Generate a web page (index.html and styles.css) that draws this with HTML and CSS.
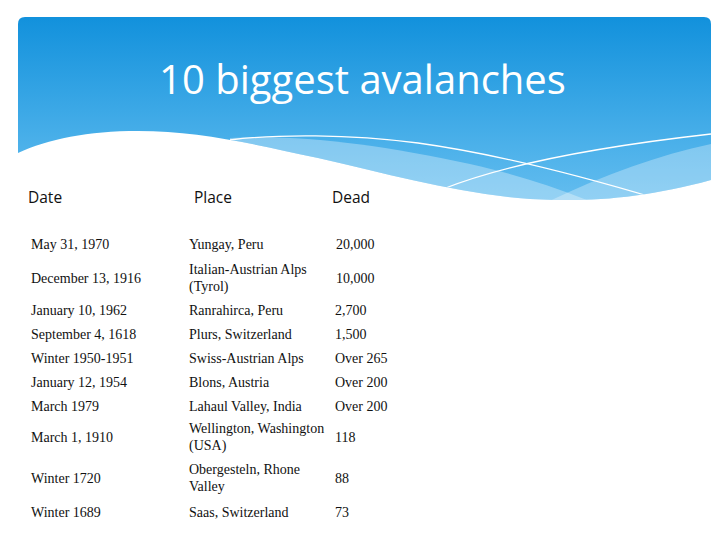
FILE: index.html
```html
<!DOCTYPE html>
<html>
<head>
<meta charset="utf-8">
<link rel="stylesheet" href="styles.css">
</head>
<body>
<div class="slide">
  <header class="banner">
    <svg class="banner-bg" width="693" height="185" viewBox="0 0 693 185" aria-hidden="true">
      <defs>
        <linearGradient id="sky" x1="0" y1="0" x2="0" y2="1">
          <stop offset="0" stop-color="#1291dc"/>
          <stop offset="0.7" stop-color="#4cb1ea"/>
          <stop offset="1" stop-color="#64bdef"/>
        </linearGradient>
        <clipPath id="wave">
          <path d="M0,7 Q0,0 7,0 L686,0 Q693,0 693,7 L693,163 C620,183 560,186 500,181 C430,174 370,157 300,141 C230,126 180,114 120,114 C70,114 30,122 0,136 Z"/>
        </clipPath>
      </defs>
      <g clip-path="url(#wave)">
        <rect x="0" y="0" width="693" height="185" fill="url(#sky)"/>
        <path d="M212,121 C280,117 360,127 452,147 C520,162 600,190 660,230 L212,230 Z" fill="#ffffff" fill-opacity="0.32"/>
        <path d="M500,200 C560,168 630,140 693,127 L693,230 L500,230 Z" fill="#ffffff" fill-opacity="0.3"/>
        <path d="M212,123 C260,117 330,117 400,126 C480,137 560,158 640,182" fill="none" stroke="#ffffff" stroke-width="1.3"/>
        <path d="M425,172 C475,152 560,132 693,117" fill="none" stroke="#ffffff" stroke-width="1.3"/>
      </g>
    </svg>
    <h1 class="title">10 biggest avalanches</h1>
  </header>

  <div class="labels">
    <span class="lab lab-date">Date</span>
    <span class="lab lab-place">Place</span>
    <span class="lab lab-dead">Dead</span>
  </div>

  <table class="data">
    <tr class="h28"><td>May 31, 1970</td><td>Yungay, Peru</td><td class="num">20,000</td></tr>
    <tr class="h40"><td>December 13, 1916</td><td>Italian-Austrian Alps<br>(Tyrol)</td><td class="num">10,000</td></tr>
    <tr><td>January 10, 1962</td><td>Ranrahirca, Peru</td><td>2,700</td></tr>
    <tr><td>September 4, 1618</td><td>Plurs, Switzerland</td><td>1,500</td></tr>
    <tr><td>Winter 1950-1951</td><td>Swiss-Austrian Alps</td><td>Over 265</td></tr>
    <tr><td>January 12, 1954</td><td>Blons, Austria</td><td>Over 200</td></tr>
    <tr><td>March 1979</td><td>Lahaul Valley, India</td><td>Over 200</td></tr>
    <tr class="h38"><td>March 1, 1910</td><td>Wellington, Washington<br>(USA)</td><td>118</td></tr>
    <tr class="h44"><td>Winter 1720</td><td>Obergesteln, Rhone<br>Valley</td><td>88</td></tr>
    <tr><td>Winter 1689</td><td>Saas, Switzerland</td><td>73</td></tr>
  </table>
</div>
</body>
</html>
```

FILE: styles.css
```css
html, body {
  margin: 0;
  padding: 0;
  background: #ffffff;
}

.slide {
  width: 728px;
  height: 546px;
  overflow: hidden;
  padding-top: 17px;
  box-sizing: border-box;
}

.banner {
  position: relative;
  width: 693px;
  height: 168px;
  margin-left: 18px;
}

.banner-bg {
  position: absolute;
  left: 0;
  top: 0;
  display: block;
}

.title {
  position: relative;
  margin: 0;
  padding-top: 39px;
  padding-right: 4px;
  text-align: center;
  font-family: "Open Sans", "Liberation Sans", sans-serif;
  font-weight: 400;
  font-size: 40px;
  line-height: 46px;
  color: #ffffff;
  letter-spacing: 0;
}

.labels {
  display: flex;
  height: 24px;
  align-items: center;
  font-family: "Open Sans", "Liberation Sans", sans-serif;
  font-size: 15.5px;
  color: #111111;
  padding-left: 28px;
}

.lab-date { width: 166px; }
.lab-place { width: 138px; }

.data {
  border-collapse: collapse;
  margin-top: 21px;
  margin-left: 24px;
  font-family: "Liberation Serif", "Times New Roman", serif;
  font-size: 14px;
  line-height: 17px;
  color: #111111;
}

.data td {
  height: 24px;
  padding: 0 0 0 7px;
  vertical-align: middle;
  white-space: nowrap;
}

.data td:nth-child(1) { width: 151px; }
.data td:nth-child(2) { width: 139px; }
.data td:nth-child(3) { width: 100px; padding-left: 7px; }
.data td.num { padding-left: 8px; }

.data tr.h28 td { height: 28px; }
.data tr.h40 td { height: 40px; }
.data tr.h38 td { height: 38px; }
.data tr.h44 td { height: 44px; }
```
